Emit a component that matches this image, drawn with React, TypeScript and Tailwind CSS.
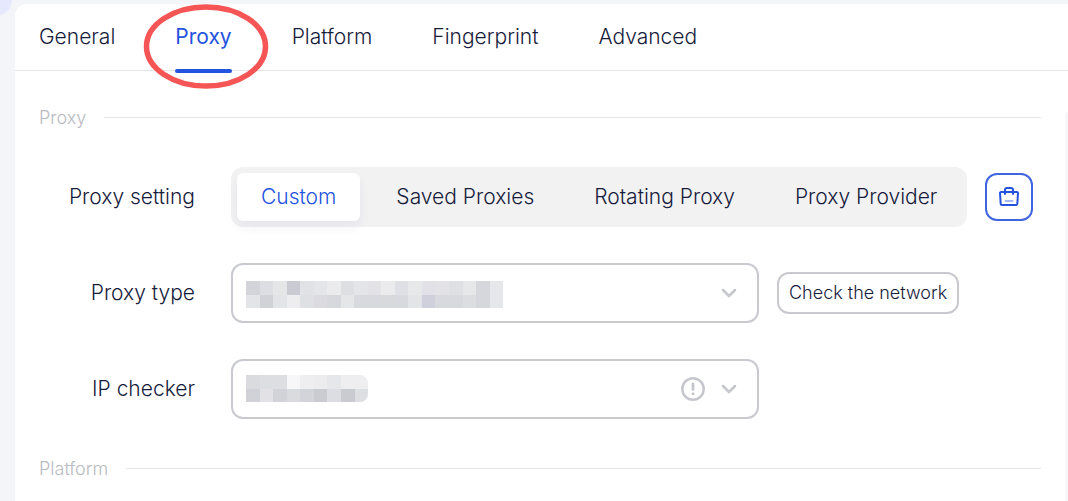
import React, { useState } from 'react';

const TABS = ['General', 'Proxy', 'Platform', 'Fingerprint', 'Advanced'];
const PROXY_SETTINGS = ['Custom', 'Saved Proxies', 'Rotating Proxy', 'Proxy Provider'];

// Colours of the blocks that hide the chosen values, row by row
const TYPE_MASK = [
  ['#d3d4da', '#dddee3', '#e5e6e8', '#c9cad2', '#e1e2e6', '#e4e5e8', '#ebebed', '#dedfe3', '#e4e5e8', '#e3e3e7', '#ebebed', '#dfe0e5', '#e7e8ea', '#e2e1e7', '#e2e2e7', '#dfe0e4', '#e6e7e9', '#d6d7dc', '#e6e7ea'],
  ['#e3e4e7', '#d1d2d8', '#e3e4e7', '#ededef', '#dfe0e4', '#dbdae0', '#d7d8dd', '#e5e6e8', '#d8d9de', '#d8d9de', '#d8d9dd', '#d8d9de', '#e3e4e7', '#d0d0dc', '#d8d9de', '#d8d9de', '#dcdde1', '#d6d7dc', '#e6e7ea'],
];
const CHECKER_MASK = [
  ['#dadbdf', '#dddee1', '#dddee1', '#f7f7f9', '#eeeef0', '#ececee', '#e6e7ea', '#eeeef0', '#eeeef0'],
  ['#d1d2d7', '#e1e1e6', '#d2d3d8', '#dadbdf', '#d3d4d9', '#cacad1', '#dcdde2', '#cacbd1', '#dddee2'],
];

function Mask({ rows, className }: { rows: string[][]; className: string }) {
  return (
    <div className={`pointer-events-none absolute left-[15px] h-[27px] overflow-hidden ${className}`} aria-hidden="true">
      {rows.map((row, idx) => (
        <div key={idx} className="flex h-1/2">
          {row.map((color, i) => (
            <span key={i} className="h-full flex-1" style={{ backgroundColor: color }} />
          ))}
        </div>
      ))}
    </div>
  );
}

function Chevron() {
  return (
    <svg width="16" height="10" viewBox="0 0 16 10" fill="none" stroke="#c6c7cd" strokeWidth="2.5" strokeLinecap="round" strokeLinejoin="round">
      <path d="M2 2l6 6 6-6" />
    </svg>
  );
}

function SectionTitle({ children }: { children: React.ReactNode }) {
  return (
    <div className="flex items-center gap-[18px]">
      <h2 className="text-[18px] leading-[27px] text-[#b8bac2]">{children}</h2>
      <div className="h-px flex-1 bg-[#e5e6e8]" />
    </div>
  );
}

const labelClass = 'w-[156px] shrink-0 text-right text-[21px] leading-7';
const selectClass = 'block h-[60px] w-full appearance-none rounded-xl border-2 border-[#c9cad0] bg-white px-4 outline-none';

export default function App() {
  const [tab, setTab] = useState('Proxy');
  const [setting, setSetting] = useState('Custom');

  return (
    <div className="min-h-screen overflow-hidden bg-[#f4f5f8] pl-[15px] pt-1 font-['Inter',sans-serif] font-[330] text-[#171b3c]">
      {/* Soft blob in the page corner */}
      <div className="absolute -left-5 -top-4 h-8 w-8 rounded-full bg-[#e6e9fe]" />

      <main className="relative min-h-[calc(100vh-4px)] rounded-tl-xl bg-white">
        <nav className="flex gap-[60px] border-b border-[#e5e6e8] px-6">
          {TABS.map((name) => (
            <button
              key={name}
              type="button"
              onClick={() => setTab(name)}
              className={`relative h-[66px] cursor-pointer text-[21px] leading-7 ${name === tab ? 'font-normal text-[#2453e0]' : ''}`}
            >
              {name}
              {name === tab && (
                <>
                  <span className="absolute inset-x-0 -bottom-[3px] h-1 rounded-full bg-[#2453e0]" />
                  {/* Hand-drawn style highlight round the current tab */}
                  <svg className="pointer-events-none absolute left-1/2 top-0 max-w-none -translate-x-1/2" width="132" height="88" viewBox="0 0 132 88" fill="none">
                    <ellipse cx="69" cy="42.500" rx="59.500" ry="39.500" stroke="#f65555" strokeWidth="5.500" />
                  </svg>
                </>
              )}
            </button>
          ))}
        </nav>

        <div className="flex flex-col gap-9 pl-6 pr-[27px] pt-[33px]">
          <SectionTitle>Proxy</SectionTitle>

          <div className="flex items-center gap-9">
            <span id="proxy-setting" className={labelClass}>Proxy setting</span>
            <div className="flex items-center gap-[18px]">
              <div role="group" aria-labelledby="proxy-setting" className="flex gap-3 rounded-xl bg-[#f2f2f3] p-[6px]">
                {PROXY_SETTINGS.map((name) => (
                  <button
                    key={name}
                    type="button"
                    aria-pressed={name === setting}
                    onClick={() => setSetting(name)}
                    className={`h-12 cursor-pointer whitespace-nowrap rounded-md px-6 text-[21px] leading-7 ${
                      name === setting ? 'bg-white text-[#2453e0] shadow-[0_6px_12px_rgba(34,38,74,0.06)]' : ''
                    }`}
                  >
                    {name}
                  </button>
                ))}
              </div>
              <button
                type="button"
                aria-label="Proxy store"
                className="flex h-12 w-12 shrink-0 cursor-pointer items-center justify-center rounded-xl border-2 border-[#4065e0]"
              >
                <svg width="24" height="24" viewBox="0 0 24 24" fill="none" stroke="#2453e0" strokeWidth="2" strokeLinecap="round" strokeLinejoin="round">
                  <path d="M4 7h16a1 1 0 0 1 1 1.100l-.7 10.700a1.300 1.300 0 0 1-1.300 1.200H5a1.300 1.300 0 0 1-1.300-1.200L3 8.100A1 1 0 0 1 4 7z" />
                  <path d="M8 9V5a2 2 0 0 1 2-2h4a2 2 0 0 1 2 2v4" />
                  <path d="M8.500 16h7" stroke="#a3b6f3" />
                </svg>
              </button>
            </div>
          </div>

          <div className="flex items-center gap-9">
            <label htmlFor="proxy-type" className={labelClass}>Proxy type</label>
            <div className="flex flex-1 items-center gap-[18px]">
              <div className="relative w-full max-w-[528px]">
                <select id="proxy-type" className={selectClass} />
                <Mask rows={TYPE_MASK} className="top-[18px] w-[257px]" />
                <div className="pointer-events-none absolute inset-y-0 right-[22px] flex items-center">
                  <Chevron />
                </div>
              </div>
              <button
                type="button"
                className="h-[42px] shrink-0 cursor-pointer whitespace-nowrap rounded-xl border-2 border-[#c9cad0] px-[10px] text-[18px] leading-6"
              >
                Check the network
              </button>
            </div>
          </div>

          <div className="flex items-center gap-9">
            <label htmlFor="ip-checker" className={labelClass}>IP checker</label>
            <div className="relative w-full max-w-[528px]">
              <select id="ip-checker" className={selectClass} />
              <Mask rows={CHECKER_MASK} className="top-4 w-[122px] rounded-r-lg" />
              <div className="pointer-events-none absolute inset-y-0 right-[22px] flex items-center gap-4">
                <svg width="24" height="24" viewBox="0 0 24 24" fill="none" stroke="#c6c7cd" strokeWidth="2.500" strokeLinecap="round">
                  <circle cx="12" cy="12" r="10.700" />
                  <path d="M12 7v5.500" strokeWidth="2.800" />
                  <circle cx="12" cy="16.700" r="1.500" fill="#c6c7cd" stroke="none" />
                </svg>
                <Chevron />
              </div>
            </div>
          </div>

          <SectionTitle>Platform</SectionTitle>
        </div>

        {/* Scroll track */}
        <div className="absolute bottom-0 right-0 top-[108px] w-[3px] rounded-tl bg-[#f7f7f9]" />
      </main>
    </div>
  );
}
